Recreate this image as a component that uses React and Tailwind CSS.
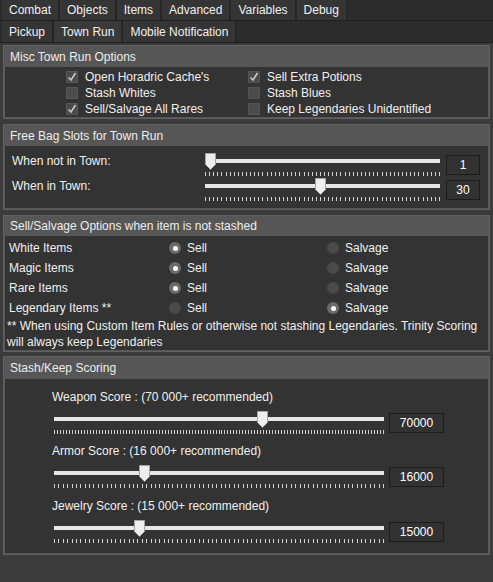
import React from 'react'

const TOP_TABS = ['Combat', 'Objects', 'Items', 'Advanced', 'Variables', 'Debug']
const SUB_TABS = ['Pickup', 'Town Run', 'Mobile Notification']

function TabRow({ tabs, active, height }) {
  return (
    <div className={`flex pl-[2px] bg-[#2c2c2c] border-b border-[#1f1f1f] ${height}`}>
      {tabs.map(t => (
        <div
          key={t}
          className={`px-[7px] flex items-center border-r-2 border-[#262626] ${t === active ? 'bg-[#3a3a3a]' : 'bg-[#353535]'}`}
        >
          {t}
        </div>
      ))}
    </div>
  )
}

function Group({ title, headerClass, className = '', children }) {
  return (
    <div className={`border border-[#616161] bg-[#565656] ${className}`}>
      <div className={`${headerClass} flex items-center px-[6px] text-[#ededed]`}>{title}</div>
      <div className="mx-[1px] mb-[1px] bg-[#333333]">{children}</div>
    </div>
  )
}

function Check({ checked, label }) {
  return (
    <div className="flex items-center h-[16px]">
      <div className="w-[12px] h-[12px] bg-[#4b4b4b] border border-[#555555] flex items-center justify-center">
        {checked && (
          <svg width="10" height="10" viewBox="0 0 10 10">
            <path d="M1.5 5.5 L4 8 L8.5 1" fill="none" stroke="#c9c9c9" strokeWidth="1.6" />
          </svg>
        )}
      </div>
      <span className="ml-[7px]">{label}</span>
    </div>
  )
}

function Radio({ on, label }) {
  return (
    <div className="flex items-center">
      <div className={`w-[12px] h-[12px] rounded-full flex items-center justify-center ${on ? 'bg-[#6b6b6b]' : 'bg-[#4a4a4a]'}`}>
        {on && <div className="w-[5px] h-[5px] rounded-full bg-white" />}
      </div>
      <span className="ml-[6px]">{label}</span>
    </div>
  )
}

function Ticks({ width, count }) {
  const lines = []
  for (let i = 0; i <= count; i++) {
    const x = Math.round(i * (width - 1) / count) + 0.5
    lines.push(<line key={i} x1={x} x2={x} y1={0} y2={4} stroke="#d2d2d2" strokeWidth="1" />)
  }
  return (
    <svg width={width} height="4" className="absolute left-0 top-[23px]">
      {lines}
    </svg>
  )
}

function Slider({ width, pct, ticks }) {
  const left = Math.round(pct * (width - 11))
  return (
    <div className="relative h-[25px] shrink-0" style={{ width }}>
      <div className="absolute left-0 right-0 top-[10px] h-[4px] bg-[#e6e6e6]" />
      <svg width="11" height="17" viewBox="0 0 11 17" className="absolute top-[4px]" style={{ left }}>
        <path d="M0.5 0.5 H10.5 V11.5 L5.5 16.5 L0.5 11.5 Z" fill="#eeeeee" stroke="#a5a5a5" strokeWidth="1" />
      </svg>
      <Ticks width={width} count={ticks} />
    </div>
  )
}

function ValueBox({ value, className }) {
  return (
    <div className={`h-[20px] bg-[#323232] border border-[#1c1c1c] flex items-center justify-center text-white ${className}`}>
      {value}
    </div>
  )
}

const SCORES = [
  ['Weapon Score : (70 000+ recommended)', 70000, 110000, 110, ''],
  ['Armor Score : (16 000+ recommended)', 16000, 60000, 75, 'mt-[10px]'],
  ['Jewelry Score : (15 000+ recommended)', 15000, 60000, 75, 'mt-[11px]'],
]

export default function App() {
  return (
    <div className="w-[493px] h-[582px] overflow-hidden bg-[#3b3b3b] text-[12px] text-[#f0f0f0] font-['Liberation_Sans',Arial,sans-serif]">
      <TabRow tabs={TOP_TABS} height="h-[21px]" />
      <TabRow tabs={SUB_TABS} active="Town Run" height="h-[22px]" />

      <div className="mx-[3px] mt-[2px] flex flex-col gap-[5px]">
        {/* Misc options */}
        <Group title="Misc Town Run Options" headerClass="h-[21px]">
          <div className="grid grid-cols-[182px_1fr] pl-[61px] pt-[2px]">
            <Check checked label="Open Horadric Cache's" />
            <Check checked label="Sell Extra Potions" />
            <Check label="Stash Whites" />
            <Check label="Stash Blues" />
            <Check checked label="Sell/Salvage All Rares" />
            <Check label="Keep Legendaries Unidentified" />
          </div>
        </Group>

        {/* Bag slots */}
        <Group title="Free Bag Slots for Town Run" headerClass="h-[21px]">
          <div className="pt-[3px] pb-[9px]">
            {[['When not in Town:', 1], ['When in Town:', 30]].map(([label, v]) => (
              <div key={label} className="flex items-start h-[25px]">
                <div className="w-[200px] pl-[7px] leading-[24px]">{label}</div>
                <Slider width={235} pct={(v - 1) / 59} ticks={57} />
                <ValueBox value={v} className="ml-[6px] w-[34px] mt-[6px]" />
              </div>
            ))}
          </div>
        </Group>

        {/* Sell / salvage */}
        <Group title="Sell/Salvage Options when item is not stashed" headerClass="h-[20px]">
          <div className="pl-[4px] pt-[2px]">
            {[
              ['White Items', true],
              ['Magic Items', true],
              ['Rare Items', true],
              ['Legendary Items **', false],
            ].map(([label, sell]) => (
              <div key={label} className="flex items-center h-[20px]">
                <div className="w-[160px]">{label}</div>
                <div className="w-[158px]"><Radio on={sell} label="Sell" /></div>
                <Radio on={!sell} label="Salvage" />
              </div>
            ))}
            <p className="leading-[16px] -ml-[2px]">
              ** When using Custom Item Rules or otherwise not stashing Legendaries. Trinity Scoring<br />
              will always keep Legendaries
            </p>
          </div>
        </Group>

        {/* Scoring */}
        <Group title="Stash/Keep Scoring" headerClass="h-[22px]" className="-mt-[1px]">
          <div className="pt-[10px] pb-[11px]">
            {SCORES.map(([label, v, max, ticks, gap]) => (
              <div key={label} className={gap}>
                <div className="pl-[47px] leading-[16px]">{label}</div>
                <div className="flex items-start mt-[2px] pl-[49px]">
                  <Slider width={330} pct={v / max} ticks={ticks} />
                  <ValueBox value={v} className="ml-[5px] w-[55px] mt-[6px]" />
                </div>
              </div>
            ))}
          </div>
        </Group>
      </div>
    </div>
  )
}
